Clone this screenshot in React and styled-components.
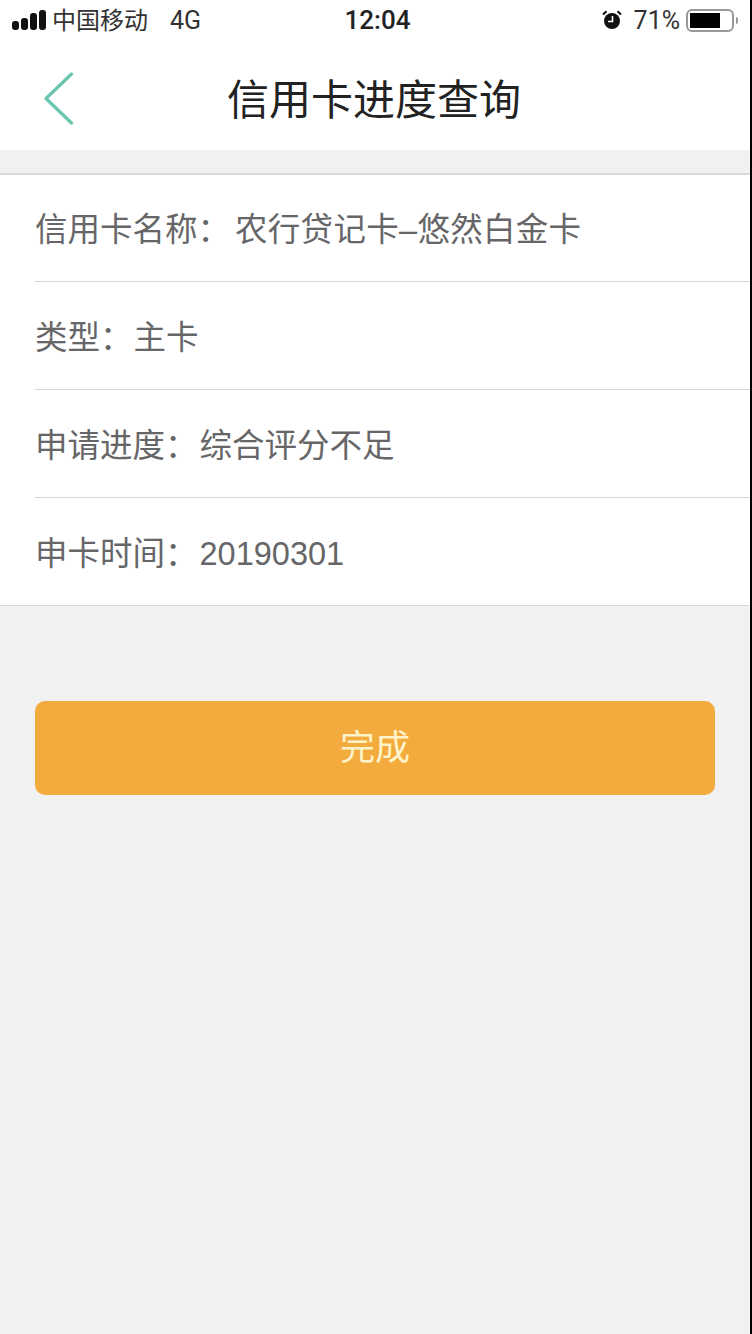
import React from 'react';
import styled, { createGlobalStyle } from 'styled-components';

const GlobalStyle = createGlobalStyle`
  html, body {
    margin: 0;
    padding: 0;
  }
  body {
    background: #f1f1f2;
    font-family: "Liberation Sans", "Noto Sans CJK SC", sans-serif;
  }
`;

const rows = [
  { label: '信用卡名称：', value: '农行贷记卡–悠然白金卡', gap: 5, track: 0.3 },
  { label: '类型：', value: '主卡', gap: 1, track: 0 },
  { label: '申请进度：', value: '综合评分不足', gap: 2, track: 0 },
  { label: '申卡时间：', value: '20190301', gap: 2, track: 0 },
];

export default function App() {
  return (
    <Page>
      <GlobalStyle />
      <StatusBar>
        <Carrier>
          <Signal>
            <SignalBar $h={9} />
            <SignalBar $h={12} />
            <SignalBar $h={17} />
            <SignalBar $h={20} />
          </Signal>
          <CarrierName>中国移动</CarrierName>
          <Network>4G</Network>
        </Carrier>
        <Clock>12:04</Clock>
        <Power>
          <svg width="20" height="20" viewBox="0 0 20 20">
            <circle cx="10" cy="11" r="8" fill="#111" />
            <path d="M10.5 6V11.5H6" stroke="#fff" strokeWidth="1.6" fill="none" />
            <path d="M1 4.5L4.5 1.2M19 4.5L15.5 1.2" stroke="#111" strokeWidth="2.2" />
          </svg>
          <Percent>71%</Percent>
          <Battery>
            <BatteryFill />
          </Battery>
          <BatteryCap />
        </Power>
      </StatusBar>
      <NavBar>
        <BackIcon width="30" height="54" viewBox="0 0 30 54">
          <path d="M27.5 2L2 26.5L27.5 51" stroke="#68c5ae" strokeWidth="3.2" fill="none" strokeLinecap="round" strokeLinejoin="round" />
        </BackIcon>
        <Title>信用卡进度查询</Title>
      </NavBar>
      <List>
        {rows.map((row) => (
          <Row key={row.label}>
            <RowText>
              <span>{row.label}</span>
              <RowValue $gap={row.gap} $track={row.track}>{row.value}</RowValue>
            </RowText>
          </Row>
        ))}
      </List>
      <ButtonWrap>
        <DoneButton>完成</DoneButton>
      </ButtonWrap>
      <Edge />
    </Page>
  );
}

const Page = styled.div`
  position: relative;
  width: 752px;
  height: 1334px;
  overflow: hidden;
  background: #f1f1f2;
`;

const Edge = styled.div`
  position: absolute;
  top: 0;
  right: 0;
  width: 2px;
  height: 100%;
  background: #000;
`;

const StatusBar = styled.div`
  display: grid;
  grid-template-columns: 1fr auto 1fr;
  align-items: center;
  height: 40px;
  padding: 0 14px 0 12px;
  background: #fff;
  color: #1a1a1a;
  font-size: 24px;
`;

const Carrier = styled.div`
  display: flex;
  align-items: center;
  color: #333;
`;

const CarrierName = styled.span`
  margin-bottom: 3px;
`;

const Signal = styled.div`
  display: flex;
  align-items: flex-end;
  gap: 2px;
  height: 20px;
  margin-right: 6px;
`;

const SignalBar = styled.div`
  width: 7px;
  height: ${(p) => p.$h}px;
  border-radius: 3px;
  background: #111;
`;

const Network = styled.span`
  margin-left: 22px;
  font-family: Roboto, sans-serif;
  font-size: 25px;
`;

const Clock = styled.div`
  margin-left: 5px;
  font-family: Roboto, sans-serif;
  font-size: 26px;
  font-weight: 500;
  color: #222;
`;

const Power = styled.div`
  display: flex;
  align-items: center;
  justify-content: flex-end;
  color: #333;
`;

const Percent = styled.span`
  margin-left: 12px;
  margin-right: 6px;
  font-family: Roboto, sans-serif;
  font-size: 25px;
`;

const Battery = styled.div`
  box-sizing: border-box;
  width: 48px;
  height: 23px;
  padding: 2px;
  border: 2px solid #999;
  border-radius: 6px;
`;

const BatteryFill = styled.div`
  width: 30px;
  height: 100%;
  background: #000;
`;

const BatteryCap = styled.div`
  width: 2px;
  height: 7px;
  margin-left: 2px;
  border-radius: 0 2px 2px 0;
  background: #999;
`;

const NavBar = styled.div`
  position: relative;
  display: flex;
  align-items: center;
  justify-content: center;
  height: 110px;
  background: #fff;
`;

const BackIcon = styled.svg`
  position: absolute;
  left: 44px;
  top: 32px;
`;

const Title = styled.h1`
  margin: 2px 0 0 -4px;
  font-size: 42px;
  font-weight: 400;
  color: #222;
`;

const List = styled.div`
  margin-top: 23px;
  border-top: 2px solid #d9d9db;
  border-bottom: 1px solid #dadadc;
  background: #fff;
`;

const Row = styled.div`
  box-sizing: border-box;
  height: 108px;
  margin-left: 35px;
  padding-bottom: 3px;
  display: flex;
  align-items: center;
  border-bottom: 1px solid #d4d4d6;

  &:first-child {
    height: 107px;
  }
  &:last-child {
    height: 107px;
    border-bottom: none;
  }
`;

const RowText = styled.div`
  display: flex;
  align-items: baseline;
  font-size: 32.5px;
  color: #666668;
`;

const RowValue = styled.span`
  margin-left: ${(p) => p.$gap}px;
  letter-spacing: ${(p) => p.$track}px;
`;

const ButtonWrap = styled.div`
  padding: 95px 37px 0 35px;
`;

const DoneButton = styled.button`
  display: block;
  width: 100%;
  height: 94px;
  padding: 0 0 7px;
  border: none;
  border-radius: 10px;
  background: #f3ab3e;
  color: #fff3c9;
  font-family: inherit;
  font-size: 35px;
`;
